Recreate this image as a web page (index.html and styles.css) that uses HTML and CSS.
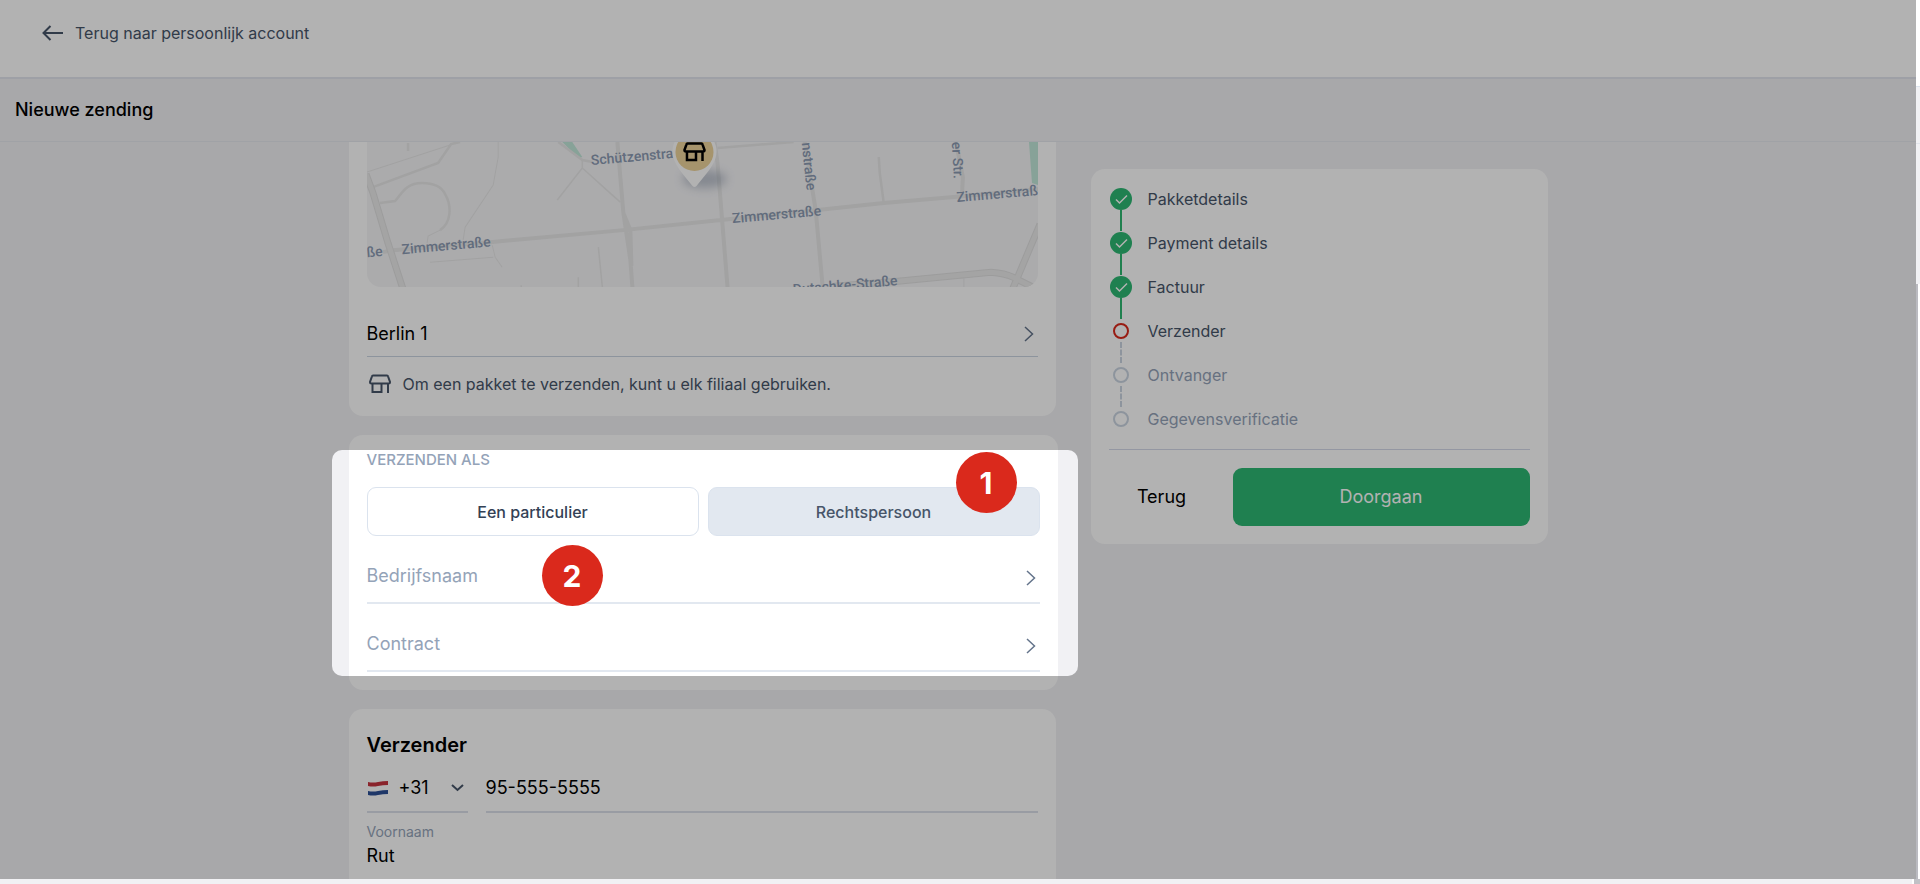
FILE: index.html
```html
<!DOCTYPE html>
<html lang="nl">
<head>
<meta charset="utf-8">
<title>Nieuwe zending</title>
<link rel="stylesheet" href="styles.css">
</head>
<body>
<svg class="sprite" aria-hidden="true">
  <symbol id="shop" viewBox="0 0 24 22"><path d="M5 2.500h14q.8 0 1 .8L22 9q0 1.500-1.500 1.500h-17Q2 10.500 2 9l2-5.700q.2-.8 1-.8zM4.500 10.500v8.500h9v-8.500M20 10.500v9.500"/></symbol>
  <symbol id="chevron" viewBox="0 0 10 16"><path d="M1 1l7.500 7L1 15"/></symbol>
  <symbol id="check" viewBox="0 0 22 22"><path d="M6 11.500l3.500 3.500L17 7.500"/></symbol>
</svg>
<div class="window">
  <div class="screen">
    <header class="topbar">
      <a class="back" href="#">
        <svg class="back-icon" viewBox="0 0 22 16"><path d="M21 8H1.500M8.500 1L1.500 8l7 7"/></svg>
        Terug naar persoonlijk account
      </a>
    </header>
    <h1 class="page-title">Nieuwe zending</h1>
    <div class="content">
      <main class="column">
        <section class="card card-branch">
          <svg class="map" viewBox="0 0 670 145" preserveAspectRatio="xMidYMid slice" role="img" aria-label="Kaart">
            <rect width="670" height="145" fill="#f5f5f7"/>
            <path d="M195 0h10l10 15-4 1zM661 0h9v43l-6-2z" fill="#c2e8da"/>
            <g fill="none" stroke="#e8e8e8">
              <path stroke-width="1" d="M0 30L83 3M131 0v15l-5 28-28 42-2 13M60 101l1-7 12-6M125 103l3 12 7 10M63 120l63-5M596 135v10"/>
              <path stroke-width="1.500" d="M215 18v8l-25 32M215 26l30 27 8 7M231 105l4 40M211 135v10M154 143v2"/>
              <path stroke-width="2.500" d="M6 45l65-24L84 2l9-2M41 1v8M13 61l15-2c7-8 11-18 27-18 12 0 19 3 23 11 7 12 6 29-5 36M511 15l1 16 4 30M191 0l24 18 10 2M350 6l76-6"/>
              <path stroke-width="4" d="M16 110l10-2 97-8 133-12 107-11 87-9 66-7 70-6 84-8M250 0l6 71 7 47 2 27M256 71l7 17 1 36M347 0l3 21 10 124M437 0l11 68 7 77M588 0l7 35-1 20"/>
              <path stroke-width="7" stroke="#e0e0e0" d="M-1 32l7 19 15 50 15 46M466 144l64-5 93-9q14 1 22 5l20 10M672 82l-27 64"/>
              <path stroke-width="5" stroke="#ebebeb" d="M-1 32l7 19 15 50 15 46M466 144l64-5 93-9q14 1 22 5l20 10M672 82l-27 64"/>
            </g>
            <g class="map-label">
              <text transform="translate(0 115) rotate(-5)">ße</text>
              <text transform="translate(35 112) rotate(-5)">Zimmerstraße</text>
              <text transform="translate(365 81) rotate(-5)">Zimmerstraße</text>
              <text transform="translate(589 60) rotate(-5)">Zimmerstraße</text>
              <text transform="translate(224 23) rotate(-5)">Schützenstra</text>
              <text transform="translate(434 1) rotate(84)">nstraße</text>
              <text transform="translate(584 0) rotate(87)">er Str.</text>
              <text transform="translate(530 143) rotate(-5)" text-anchor="end">Dutschke-Straße</text>
            </g>
            <ellipse cx="337" cy="37" rx="22" ry="9" fill="#5b6b85" class="pin-shadow"/>
            <path d="M306 16a22 22 0 1 1 42 0c-3 10-13 20-19 28q-2 2-4 0c-6-8-16-18-19-28z" fill="#fff"/>
            <circle cx="327" cy="10" r="19" fill="#eed49b"/>
            <use href="#shop" x="315" y="-1" width="24" height="22" class="pin-icon"/>
          </svg>
          <button class="picker picker-branch" type="button">Berlin 1<svg class="chevron"><use href="#chevron"/></svg></button>
          <p class="hint"><svg class="hint-icon"><use href="#shop"/></svg>Om een pakket te verzenden, kunt u elk filiaal gebruiken.</p>
        </section>

        <section class="card card-type">
          <h2 class="overline">Verzenden als</h2>
          <div class="switch">
            <button class="option" type="button">Een particulier</button>
            <button class="option option-on" type="button">Rechtspersoon</button>
          </div>
          <button class="picker picker-empty" type="button">Bedrijfsnaam<svg class="chevron"><use href="#chevron"/></svg></button>
          <button class="picker picker-empty" type="button">Contract<svg class="chevron"><use href="#chevron"/></svg></button>
          <div class="spotlight">
            <span class="badge badge-first">1</span>
            <span class="badge badge-second">2</span>
          </div>
        </section>

        <section class="card card-sender">
          <h2 class="card-title">Verzender</h2>
          <div class="phone">
            <div class="country">
              <svg class="flag" viewBox="0 0 22 16"><path d="M1 2q5 1 10 0t10-1v5q-5 0-10 1T1 7z" fill="#c63440"/><path d="M1 6q5 1 10 0t10-1v5q-5 0-10 1T1 11z" fill="#fff"/><path d="M1 11q5 1 10 0t10-1v4q-5 0-10 1T1 15z" fill="#2c4f96"/></svg>
              <select class="code" aria-label="Landcode"><option>+31</option></select>
              <svg class="caret" viewBox="0 0 13 8"><path d="M1 1l5.500 5L12 1"/></svg>
            </div>
            <input class="input" type="tel" aria-label="Telefoon" value="95-555-5555">
          </div>
          <div class="field">
            <label class="label" for="first-name">Voornaam</label>
            <input class="input input-name" id="first-name" type="text" value="Rut">
          </div>
        </section>
      </main>

      <aside class="card summary">
        <ol class="steps">
          <li class="step step-done"><span class="dot"><svg><use href="#check"/></svg></span>Pakketdetails</li>
          <li class="step step-done"><span class="dot"><svg><use href="#check"/></svg></span>Payment details</li>
          <li class="step step-done"><span class="dot"><svg><use href="#check"/></svg></span>Factuur</li>
          <li class="step step-now"><span class="dot"></span>Verzender</li>
          <li class="step step-next"><span class="dot"></span>Ontvanger</li>
          <li class="step step-next"><span class="dot"></span>Gegevensverificatie</li>
        </ol>
        <div class="actions">
          <button class="button" type="button">Terug</button>
          <button class="button button-primary" type="button">Doorgaan</button>
        </div>
      </aside>
    </div>
  </div>
  <div class="edge-right"></div>
  <div class="edge-bottom"></div>
</div>
</body>
</html>
```
FILE: styles.css
```css
* { box-sizing: border-box; }

body {
  margin: 0;
  background: #f1f1f4;
  color: #000;
  font: 16px/24px Inter, "Liberation Sans", sans-serif;
}

h1, h2, p, ol { margin: 0; padding: 0; }

button, input, select {
  font: inherit;
  color: inherit;
  border: 0;
  border-radius: 0;
  background: none;
  padding: 0;
}

svg { flex: none; }
.sprite { display: none; }

.window {
  display: grid;
  grid-template: minmax(0, 1fr) 5px / minmax(0, 1fr) 4px;
  height: 100vh;
}

.screen {
  position: relative;
  overflow: hidden;
}

.edge-right {
  background:
    linear-gradient(#dde4ee, #dde4ee) 0 86px / 100% 1px no-repeat,
    linear-gradient(#fff, #fff) 0 0 / 100% 86px no-repeat,
    linear-gradient(90deg, #babac0 2px, #fff 2px) 0 284px / 100% 100% no-repeat,
    linear-gradient(#e2e5eb, #e2e5eb) 0 143px / 100% 1px no-repeat;
}

.edge-bottom {
  grid-column: 1 / -1;
  background: linear-gradient(90deg, #fff 2px, #c1c1c6 2px) right / 8px 100% no-repeat;
}

.topbar {
  display: flex;
  background: #fff;
  border-bottom: 2px solid #e2e6ee;
  padding: 21px 42px 32px;
}

.back {
  display: flex;
  align-items: center;
  gap: 11px;
  color: #475569;
  text-decoration: none;
}

.back-icon {
  width: 22px;
  height: 16px;
  fill: none;
  stroke: #475569;
  stroke-width: 2;
}

.page-title {
  padding: 19px 15px;
  border-bottom: 1px solid #e5e8ee;
  font-size: 18px;
  font-weight: 500;
  line-height: 24px;
}

.content {
  display: grid;
  grid-template-columns: minmax(0, 707fr) minmax(0, 457fr);
  gap: 35px;
  align-items: start;
  max-width: 1219px;
  margin: 0 auto;
  padding-right: 20px;
}

.column {
  display: grid;
  gap: 19px;
}

.card {
  background: #fff;
  border-radius: 14px;
  padding: 18px;
}

.card-branch {
  padding-top: 0;
  border-radius: 0 0 14px 14px;
}

.map {
  display: block;
  width: 100%;
  border-radius: 0 0 14px 14px;
}

.map-label {
  font: 500 14px Roboto, sans-serif;
  fill: #8c9bb3;
}

.pin-shadow { filter: blur(5px); opacity: 0.35; }
.pin-icon { fill: none; stroke: #000; stroke-width: 2.5; }

.picker {
  display: flex;
  align-items: center;
  justify-content: space-between;
  width: 100%;
  padding-right: 4px;
  border-bottom: 2px solid #e2e8f0;
  font-size: 18px;
  line-height: 24px;
}

.picker-branch {
  margin-top: 20px;
  padding-top: 15px;
  padding-bottom: 10px;
  border-bottom-width: 1px;
  border-color: #cbd5e1;
}

.chevron {
  width: 10px;
  height: 16px;
  fill: none;
  stroke: #64748b;
  stroke-width: 1.5;
}

.hint {
  display: flex;
  align-items: center;
  gap: 11px;
  padding: 15px 0 2px 1px;
  color: #475569;
}

.hint-icon {
  width: 24px;
  height: 22px;
  fill: none;
  stroke: #475569;
  stroke-width: 2;
}

.card-type {
  position: relative;
  margin-right: -2px;
  padding-top: 15px;
}

.overline {
  color: #94a3b8;
  font-size: 15px;
  font-weight: 500;
  line-height: 20px;
  text-transform: uppercase;
}

.switch {
  display: grid;
  grid-template-columns: 1fr 1fr;
  gap: 9px;
  margin-top: 17px;
}

.option {
  height: 49px;
  border: 1px solid #dbe3ee;
  border-radius: 9px;
  color: #334155;
  font-weight: 500;
}

.option-on {
  background: #e2e8f0;
  color: #475569;
}

.picker-empty {
  padding-top: 28px;
  padding-bottom: 14px;
  color: #94a3b8;
}

.picker-empty .chevron { margin-top: 4px; }

.spotlight {
  position: absolute;
  z-index: 1;
  inset: 15px -20px 14px -17px;
  border-radius: 10px;
  box-shadow: 0 0 0 3000px rgba(0, 0, 0, 0.3);
}

.badge {
  position: absolute;
  display: grid;
  place-items: center;
  width: 61px;
  height: 61px;
  border-radius: 50%;
  background: #da291c;
  color: #fff;
  font-size: 30px;
  font-weight: 700;
}

.badge-first { top: 2px; right: 61px; }
.badge-second { top: 95px; left: 210px; }

.card-title {
  font-size: 20px;
  font-weight: 600;
  line-height: 24px;
}

.card-sender { padding-top: 24px; }

.phone {
  display: grid;
  grid-template-columns: 101px minmax(0, 1fr);
  gap: 18px;
  margin-top: 19px;
}

.country {
  display: flex;
  align-items: center;
  gap: 10px;
  padding: 0 4px 11px 0;
  border-bottom: 2px solid #dbe0ea;
  font-size: 18px;
}

.flag { width: 22px; height: 16px; }
.code { appearance: none; flex: 1; width: 40px; }
.caret { width: 13px; height: 8px; fill: none; stroke: #475569; stroke-width: 2; }

.input {
  width: 100%;
  padding: 0 0 11px;
  border-bottom: 2px solid #dbe0ea;
  font-size: 18px;
  line-height: 24px;
}

.field { margin-top: 9px; }
.label { display: block; color: #94a3b8; font-size: 14px; line-height: 20px; }
.input-name { display: block; margin-top: 2px; }

.summary {
  margin-top: 27px;
  padding-top: 8px;
}

.steps {
  list-style: none;
  padding-bottom: 8px;
  border-bottom: 1px solid #d4d9e8;
}

.step {
  position: relative;
  display: flex;
  align-items: center;
  gap: 16px;
  height: 44px;
  padding-left: 1px;
  color: #475569;
}

.step + .step::before {
  content: "";
  position: absolute;
  left: 11px;
  top: -11px;
  height: 21px;
  border-left: 2px solid #2eb872;
}

.step-next + .step::before,
.step-now + .step::before {
  border-left-style: dashed;
  border-color: #cbd5e1;
}

.dot {
  width: 22px;
  height: 22px;
  display: grid;
  place-items: center;
}

.dot svg { width: 22px; height: 22px; fill: none; stroke: #fff; stroke-width: 1.5; }
.step-done .dot { border-radius: 50%; background: #2db873; }
.step-now .dot::before,
.step-next .dot::before {
  content: "";
  box-sizing: border-box;
  width: 16px;
  height: 16px;
  border: 2px solid #cbd5e1;
  border-radius: 50%;
}
.step-now .dot::before { border-color: #da291c; }
.step-next { color: #94a3b8; }

.actions {
  display: grid;
  grid-template-columns: 106px minmax(0, 1fr);
  gap: 18px;
  margin-top: 18px;
}

.button {
  height: 58px;
  border-radius: 9px;
  font-size: 18px;
}

.button-primary {
  background: #2db873;
  color: #fff;
}
```
